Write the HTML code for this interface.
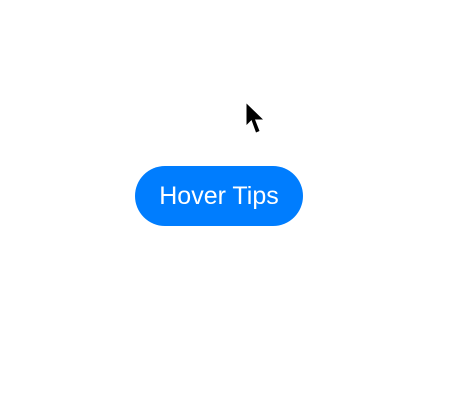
<!DOCTYPE html>
<html><head><style>
html,body{margin:0;padding:0;background:#fff;width:458px;height:417px;overflow:hidden}
.btn{position:absolute;left:135px;top:166px;width:168px;height:60px;border-radius:30px;background:#007dfe;color:#fff;font-family:"Liberation Sans",sans-serif;font-size:25px;display:flex;align-items:center;justify-content:center}
svg{position:absolute;left:246px;top:103px}
</style></head><body>
<svg width="20" height="32" viewBox="0 0 20 32"><path d="M0.5 0.5 L0.5 22 L5.5 17 L10 29.5 L13.5 28 L9 16.5 L17 16.5 Z" fill="#000"/></svg>
<div class="btn">Hover Tips</div>
</body></html>
